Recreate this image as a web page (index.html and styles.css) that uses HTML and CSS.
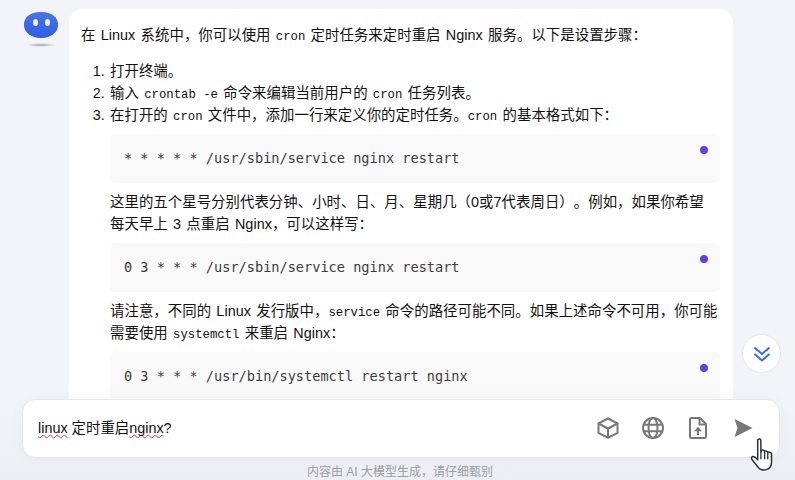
FILE: index.html
```html
<!DOCTYPE html>
<html lang="zh">
<head>
    <meta charset="UTF-8">
    <title>Chat</title>
    <link rel="stylesheet" href="styles.css">
</head>
<body>
    <div class="chat">
        <!-- Avatar -->
        <div class="avatar">
            <div class="avatar-face"><span class="eye"></span><span class="eye"></span></div>
            <div class="avatar-shadow"></div>
        </div>

        <!-- Answer -->
        <div class="bubble">
            <p class="intro">在 Linux 系统中，你可以使用 <code>cron</code> 定时任务来定时重启 Nginx 服务。以下是设置步骤：</p>
            <ol class="steps">
                <li>打开终端。</li>
                <li>输入 <code>crontab -e</code> 命令来编辑当前用户的 <code>cron</code> 任务列表。</li>
                <li>
                    在打开的 <code>cron</code> 文件中，添加一行来定义你的定时任务。<code>cron</code> 的基本格式如下：
                    <pre class="block">* * * * * /usr/sbin/service nginx restart<span class="dot"></span></pre>
                    <p>这里的五个星号分别代表分钟、小时、日、月、星期几（0或7代表周日）。例如，如果你希望<br>每天早上 3 点重启 Nginx，可以这样写：</p>
                    <pre class="block">0 3 * * * /usr/sbin/service nginx restart<span class="dot"></span></pre>
                    <p>请注意，不同的 Linux 发行版中，<code>service</code> 命令的路径可能不同。如果上述命令不可用，你可能需要使用 <code>systemctl</code> 来重启 Nginx：</p>
                    <pre class="block">0 3 * * * /usr/bin/systemctl restart nginx<span class="dot"></span></pre>
                </li>
            </ol>
        </div>
    </div>

    <!-- Scroll to bottom -->
    <button class="scroll-btn">
        <svg width="20" height="20" viewBox="0 0 20 20" fill="none" stroke="#2f6bff" stroke-width="2">
            <path d="M2.5 3.5 L10 10 L17.5 3.5"/>
            <path d="M2.5 10 L10 16.5 L17.5 10"/>
        </svg>
    </button>

    <!-- Input -->
    <div class="composer">
        <div class="input-bar">
            <div class="question"><span class="typo">linux</span> 定时重启<span class="typo">nginx</span>?</div>
            <div class="tools">
                <svg class="tool" width="24" height="24" viewBox="0 0 24 24" fill="none" stroke="#787878" stroke-width="2" stroke-linejoin="round">
                    <path d="M12 2.5 L21.5 7.5 V16.8 L12 21.8 L2.5 16.8 V7.5 Z"/>
                    <path d="M2.5 7.5 L12 12.5 L21.5 7.5 M12 12.5 V21.8"/>
                </svg>
                <svg class="tool" width="24" height="24" viewBox="0 0 24 24" fill="none" stroke="#787878" stroke-width="2">
                    <circle cx="12" cy="12" r="10"/>
                    <ellipse cx="12" cy="12" rx="4.5" ry="10"/>
                    <path d="M2.5 8.8 H21.5 M2.5 15.2 H21.5"/>
                </svg>
                <svg class="tool" width="24" height="24" viewBox="0 0 24 24" fill="none" stroke="#787878" stroke-width="2" stroke-linejoin="round">
                    <path d="M5.5 2 H14 L20 8 V20.5 Q20 22 18.5 22 H5.5 Q4 22 4 20.5 V3.5 Q4 2 5.5 2 Z"/>
                    <path d="M13.5 2 V8.5 H20"/>
                    <path d="M12 19 V14"/>
                    <path d="M8 15.2 L12 10.8 L16 15.2 Z" fill="#787878" stroke="none"/>
                </svg>
                <svg class="tool" width="24" height="24" viewBox="0 0 24 24">
                    <path d="M3.5 3 L21.5 12 L3.5 21 L6.5 12 Z" fill="#787878"/>
                </svg>
            </div>
        </div>
        <div class="notice">内容由 AI 大模型生成，请仔细甄别</div>
    </div>

    <!-- Mouse pointer -->
    <svg class="pointer" width="26" height="34" viewBox="0 0 24 32">
        <path d="M7 2.5 Q7 1 8.5 1 Q10 1 10 2.5 V13 L11 11.5 Q13 11 13.5 12.5 Q15.5 11.5 16.5 13.5 Q18.5 12.5 20 14.5 V23 Q20 29 14 30 Q9 30.5 7 27 L1.5 20 Q0.5 18 2.5 17.5 Q4 17.3 7 20.5 Z" fill="#fff" stroke="#2b2f38" stroke-width="1.4" stroke-linejoin="round"/>
        <path d="M10 13 V20 M13.5 12.5 V20 M16.5 13.5 V20" stroke="#2b2f38" stroke-width="1.2" fill="none"/>
    </svg>
</body>
</html>
```

FILE: styles.css
```css
html, body {
    height: 100%;
}

body {
    margin: 0;
    overflow: hidden;
    position: relative;
    background-color: #f3f4f8;
    color: #111;
    font-family: "Liberation Sans", "Noto Sans CJK SC", sans-serif;
    font-size: 14.4px;
    line-height: 22px;
    text-spacing-trim: space-all;
}

/* Message row */
.chat {
    display: flex;
    gap: 11px;
    padding: 9px 0 0 22px;
}

.avatar {
    flex: none;
    width: 36px;
    padding-top: 3px;
}

.avatar-face {
    display: flex;
    justify-content: center;
    align-items: center;
    gap: 7px;
    width: 34px;
    height: 26px;
    margin-left: 2px;
    border-radius: 46% 46% 48% 48%;
    background: linear-gradient(#4a76e2, #2f5de6);
    padding-bottom: 6px;
    box-sizing: border-box;
}

.eye {
    width: 5px;
    height: 7px;
    border-radius: 50%;
    background-color: #eef2ff;
}

.avatar-shadow {
    width: 30px;
    height: 4px;
    margin: 5px 0 0 4px;
    border-radius: 50%;
    background: radial-gradient(closest-side, #a3a3a3, rgba(163, 163, 163, 0));
}

.bubble {
    flex: none;
    box-sizing: border-box;
    width: 664px;
    height: 471px;
    overflow: hidden;
    padding: 15px 13px 0 12px;
    background-color: #fff;
    border-radius: 14px 14px 0 0;
    letter-spacing: 0.05px;
    word-spacing: 1.2px;
}

p {
    margin: 0;
}

.intro {
    margin-bottom: 14px;
}

.steps {
    margin: 0;
    padding-left: 29px;
}

code {
    font-family: "Liberation Mono", monospace;
    font-size: 12.3px;
    line-height: 0;
    letter-spacing: 0;
    word-spacing: 0;
}

.block {
    position: relative;
    height: 49px;
    margin: 8px 0;
    padding: 0 14px;
    background-color: #f9f9fa;
    border-radius: 5px;
    color: #3d3d3d;
    font-family: "DejaVu Sans Mono", monospace;
    font-size: 13.6px;
    line-height: 49px;
    letter-spacing: 0;
    word-spacing: 0;
}

.dot {
    position: absolute;
    top: 12px;
    right: 12px;
    width: 8px;
    height: 8px;
    border-radius: 50%;
    background-color: #6440ea;
}

/* Scroll to bottom */
.scroll-btn {
    position: absolute;
    left: 742px;
    top: 334px;
    display: flex;
    align-items: center;
    justify-content: center;
    width: 39px;
    height: 39px;
    padding: 0;
    background-color: #fff;
    border: 1px solid #e6e7ec;
    border-radius: 50%;
}

/* Bottom input */
.composer {
    position: absolute;
    left: 0;
    right: 0;
    bottom: 0;
    height: 81px;
    padding: 0 15px 0 22px;
    background: linear-gradient(#f3f4f8, #eceef3);
}

.input-bar {
    display: flex;
    align-items: center;
    justify-content: space-between;
    box-sizing: border-box;
    height: 59px;
    padding: 0 24px 2px 15px;
    background-color: #fff;
    border: 1px solid #e6e7eb;
    border-radius: 13px;
    box-shadow: 0 0 16px rgba(0, 0, 0, 0.03);
}

.typo {
    text-decoration: underline wavy #e53935;
    text-decoration-skip-ink: none;
    text-decoration-thickness: 1px;
}

.tools {
    display: flex;
    gap: 21px;
}

.notice {
    margin-top: 5px;
    padding-right: 2px;
    color: #9b9da4;
    font-size: 12px;
    line-height: 18px;
    text-align: center;
}

.pointer {
    position: absolute;
    left: 750px;
    top: 438px;
}
```
